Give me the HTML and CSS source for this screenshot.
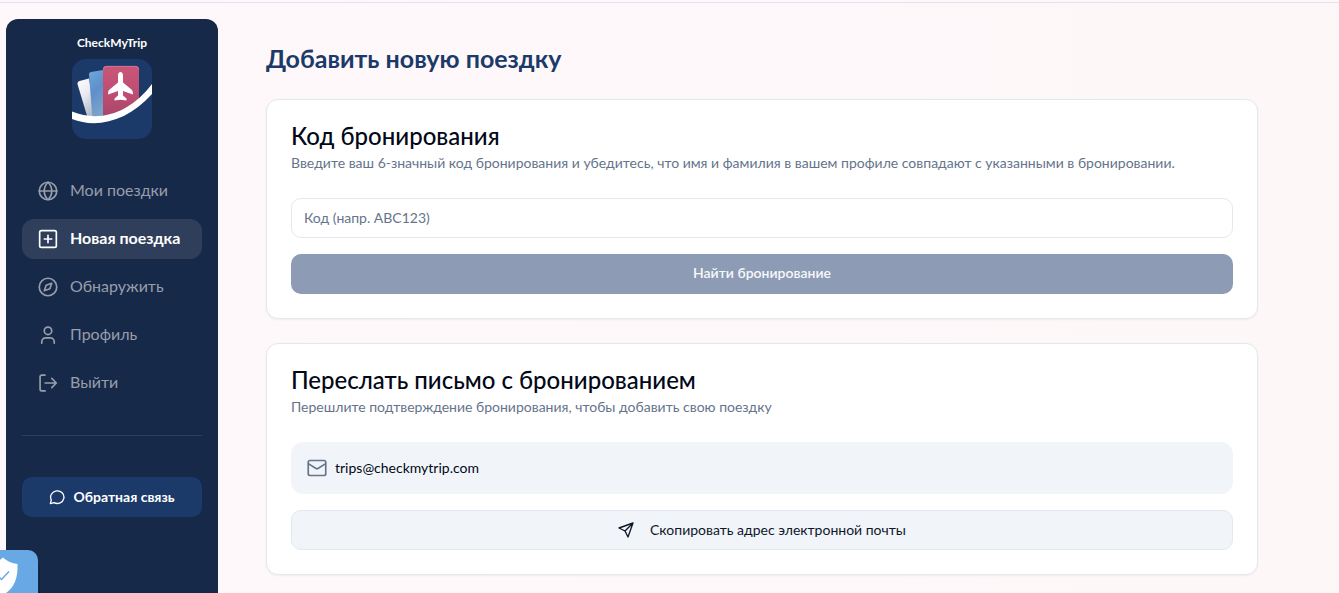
FILE: index.html
```
<!DOCTYPE html>
<html lang="ru">
<head>
  <meta charset="UTF-8" />
  <meta name="viewport" content="width=device-width, initial-scale=1.0" />
  <title>CheckMyTrip</title>
  <link rel="stylesheet" href="styles.css">
</head>
<body>
  <div class="layout">
    <aside class="sidebar">
      <div class="brand">
        <span class="brand-name">CheckMyTrip</span>
        <svg class="brand-logo" viewBox="0 0 80 80" role="img" aria-label="CheckMyTrip">
          <defs>
            <linearGradient id="cardWhite" x1="0" y1="0" x2="0.4" y2="1"><stop offset="0" stop-color="#ffffff" /><stop offset="0.5" stop-color="#e9e9f0" /><stop offset="1" stop-color="#b4bccb" /></linearGradient>
            <linearGradient id="cardBlue" x1="0" y1="0" x2="0.3" y2="1"><stop offset="0" stop-color="#6ea8dc" /><stop offset="0.5" stop-color="#5f8fca" /><stop offset="1" stop-color="#7ea3cb" /></linearGradient>
            <linearGradient id="cardRed" x1="0" y1="0" x2="0" y2="1"><stop offset="0" stop-color="#c95679" /><stop offset="0.6" stop-color="#bb4c70" /><stop offset="1" stop-color="#a3456a" /></linearGradient>
          </defs>
          <rect width="80" height="80" rx="14" fill="#1b3a69" />
          <path d="M5.6 25.5 Q5 23 7.500 22 L17 19.500 L24 60 L16 60 Z" fill="url(#cardWhite)" />
          <path d="M17 16 Q16.600 13.500 19 13 L31 11 L33 60 L20.500 60 Z" fill="url(#cardBlue)" />
          <path d="M31 10.500 Q31 7 34.500 7 H63.500 Q67 7 67 10.500 V45 Q52 57 31 60 Z" fill="url(#cardRed)" />
          <path d="M31.300 10.500 Q31.300 7.300 34.500 7.300 H63.500 Q66.700 7.300 66.700 10.500" fill="none" stroke="#e08ba6" stroke-width="0.6" />
          <path d="M48.500 13 C50 13 51 14.500 51 16.500 V23.500 L60 31 Q61 32 61 35.500 L51 32 V36.500 L54.500 39.500 V41.500 L48.500 40.800 L42.500 41.500 V39.500 L46 36.500 V32 L36 35.500 Q36 32 37 31 L46 23.500 V16.500 C46 14.500 47 13 48.500 13 Z" fill="#fff" />
          <path d="M0 60 C25 70 56 62 80 35 V25 C58 54 28 64 0 52.500 Z" fill="#fff" />
        </svg>
      </div>

      <nav class="menu">
        <a href="#trips" class="menu-link">
          <svg class="icon" viewBox="0 0 24 24"><circle cx="12" cy="12" r="10.500" /><path d="M1.500 12h21M12 1.500c3 3 4.500 6.500 4.500 10.500s-1.500 7.500-4.500 10.500c-3-3-4.500-6.500-4.500-10.500S9 4.500 12 1.500z" /></svg>
          Мои поездки
        </a>
        <a href="#new" class="menu-link active">
          <svg class="icon" viewBox="0 0 24 24"><rect x="2" y="2" width="20" height="20" rx="2" /><path d="M12 7.500v9M7.500 12h9" /></svg>
          Новая поездка
        </a>
        <a href="#discover" class="menu-link">
          <svg class="icon" viewBox="0 0 24 24"><circle cx="12" cy="12" r="10.500" /><path d="M16.500 7.500l-2.300 6.700-6.700 2.300 2.300-6.700z" /></svg>
          Обнаружить
        </a>
        <a href="#profile" class="menu-link">
          <svg class="icon" viewBox="0 0 24 24"><circle cx="12" cy="7" r="4.500" /><path d="M4.500 22v-2a4.500 4.500 0 0 1 4.500-4.500h6a4.500 4.500 0 0 1 4.500 4.500v2" /></svg>
          Профиль
        </a>
        <a href="#logout" class="menu-link">
          <svg class="icon" viewBox="0 0 24 24"><path d="M8.500 2.500H4.500a2 2 0 0 0-2 2v15a2 2 0 0 0 2 2h4M8.500 12h13.500M16.500 6.500L22 12l-5.500 5.500" /></svg>
          Выйти
        </a>
      </nav>

      <hr class="divider">

      <button type="button" class="feedback-button">
        <svg class="icon-small" viewBox="0 0 24 24"><path d="M7.500 20.500A10 9.500 0 1 0 3.500 16.500L2 22Z" /></svg>
        Обратная связь
      </button>
    </aside>

    <main class="content">
      <h1>Добавить новую поездку</h1>

      <form class="card">
        <h2><label for="code">Код бронирования</label></h2>
        <p>Введите ваш 6-значный код бронирования и убедитесь, что имя и фамилия в вашем профиле совпадают с указанными в бронировании.</p>
        <div class="card-body">
          <input type="text" id="code" name="code" class="code-input" placeholder="Код (напр. ABC123)" />
          <button type="submit" class="search-button" disabled>Найти бронирование</button>
        </div>
      </form>

      <section class="card">
        <h2>Переслать письмо с бронированием</h2>
        <p>Перешлите подтверждение бронирования, чтобы добавить свою поездку</p>
        <div class="card-body">
          <div class="email-box">
            <svg class="icon" viewBox="0 0 24 24"><rect x="1.500" y="3" width="21" height="18" rx="2" /><path d="M2 7l8.900 5.600a2 2 0 0 0 2.200 0L22 7" /></svg>
            <span>trips@checkmytrip.com</span>
          </div>
          <button type="button" class="copy-button">
            <svg class="icon-small" viewBox="0 0 24 24"><path d="M22.500 1.500L1.500 9l9 4.500 4.500 9zM22.500 1.500l-12 12" /></svg>
            Скопировать адрес электронной почты
          </button>
        </div>
      </section>
    </main>
  </div>

  <button type="button" class="privacy-button" aria-label="Настройки конфиденциальности">
    <svg viewBox="0 0 30 38"><path d="M15 0.500 C19 4 24 6.500 29.500 7 C30 20 27 32 15 37.500 C3 32 0 20 0.500 7 C6 6.500 11 4 15 0.500 Z" fill="#fff" /><path d="M8.500 17.500l5 5L21 14.500" fill="none" stroke="#68a8e4" stroke-width="1.500" /></svg>
  </button>
</body>
</html>
```
FILE: styles.css
```
* { box-sizing: border-box; }
body { margin: 0; font-family: Lato, "Open Sans", sans-serif; font-size: 14px; line-height: 20px; color: #020817; background: linear-gradient(to right, #fff8fb, #fdf7f8); border-top: 1px solid #fff8fb; }
h1, h2, p { margin: 0; }
button, input { font-family: inherit; font-size: 14px; line-height: 20px; }
svg { display: block; flex-shrink: 0; }

.layout { display: flex; min-height: calc(100vh - 2px); padding: 16px 0 0 6px; border-top: 1px solid #e5dff2; margin-top: 1px; }
.icon { width: 20px; height: 20px; }
.icon-small { width: 16px; height: 16px; }
.icon, .icon-small { fill: none; stroke: currentColor; stroke-width: 2; stroke-linecap: round; stroke-linejoin: round; }

.sidebar { width: 212px; flex-shrink: 0; padding: 16px; background-color: #172949; border-radius: 12px 12px 0 0; }
.brand { display: flex; flex-direction: column; align-items: center; gap: 8px; color: #fff; }
.brand-name { font-size: 12px; font-weight: 700; line-height: 16px; }
.brand-logo { width: 80px; height: 80px; }
.menu { display: flex; flex-direction: column; gap: 8px; margin-top: 32px; }
.menu-link { display: flex; align-items: center; gap: 12px; height: 40px; padding: 0 16px 2px; border-radius: 12px; color: #979eab; font-size: 16px; line-height: 24px; text-decoration: none; white-space: nowrap; }
.menu-link .icon { margin-top: 2px; }
.menu-link.active { background-color: #2e3e5b; color: #fff; font-weight: 700; }
.divider { margin: 32px 0 41px; border: 0; border-top: 1px solid #2e3e5b; }
.feedback-button { display: flex; align-items: center; justify-content: center; gap: 8px; width: 100%; height: 40px; padding: 0; border: none; border-radius: 10px; background-color: #1b3a69; color: #fff; font-weight: 700; cursor: pointer; }

.content { flex: 1; max-width: 1088px; padding: 24px 48px 18px; }
h1 { margin-bottom: 26px; color: #1b3a69; font-size: 25px; font-weight: 700; line-height: 30px; }
.card { padding: 24px; margin-bottom: 24px; border: 1px solid #e2e8f0; border-radius: 12px; background-color: #fff; box-shadow: 0 1px 2px rgba(0, 0, 0, 0.05); }
.card:last-child { margin-bottom: 0; }
.card h2 { font-size: 24px; font-weight: 500; line-height: 24px; }
.card p { margin-top: 5px; color: #64748b; }
.card-body { display: flex; flex-direction: column; gap: 16px; margin-top: 25px; }
.code-input { width: 100%; height: 40px; padding: 8px 12px 10px; border: 1px solid #e2e8f0; border-radius: 10px; background-color: #fff; color: #020817; }
.code-input::placeholder { color: #64748b; opacity: 1; }
.search-button { height: 40px; padding: 0 0 2px; border: none; border-radius: 10px; background-color: #8d9cb4; color: #f6f8fa; font-weight: 600; }
.email-box { display: flex; align-items: center; gap: 8px; padding: 16px; border-radius: 12px; background-color: #f1f5f9; }
.email-box .icon { color: #64748b; }
.copy-button { display: flex; align-items: center; justify-content: center; gap: 16px; height: 40px; border: 1px solid #e2e8f0; border-radius: 10px; background-color: #f1f5f9; color: #0f172a; cursor: pointer; }

/* privacy widget sticks out of the left edge */
.privacy-button { position: fixed; left: -12px; bottom: 0; width: 50px; height: 43px; padding: 7px 20px 0 0; border: none; border-radius: 0 10px 0 0; background-color: #68a8e4; cursor: pointer; }
.privacy-button svg { width: 30px; height: 38px; }
.privacy-button::after { content: ""; position: absolute; top: 16px; right: -2px; bottom: 0; border-right: 1px dotted #0d1830; }
```
